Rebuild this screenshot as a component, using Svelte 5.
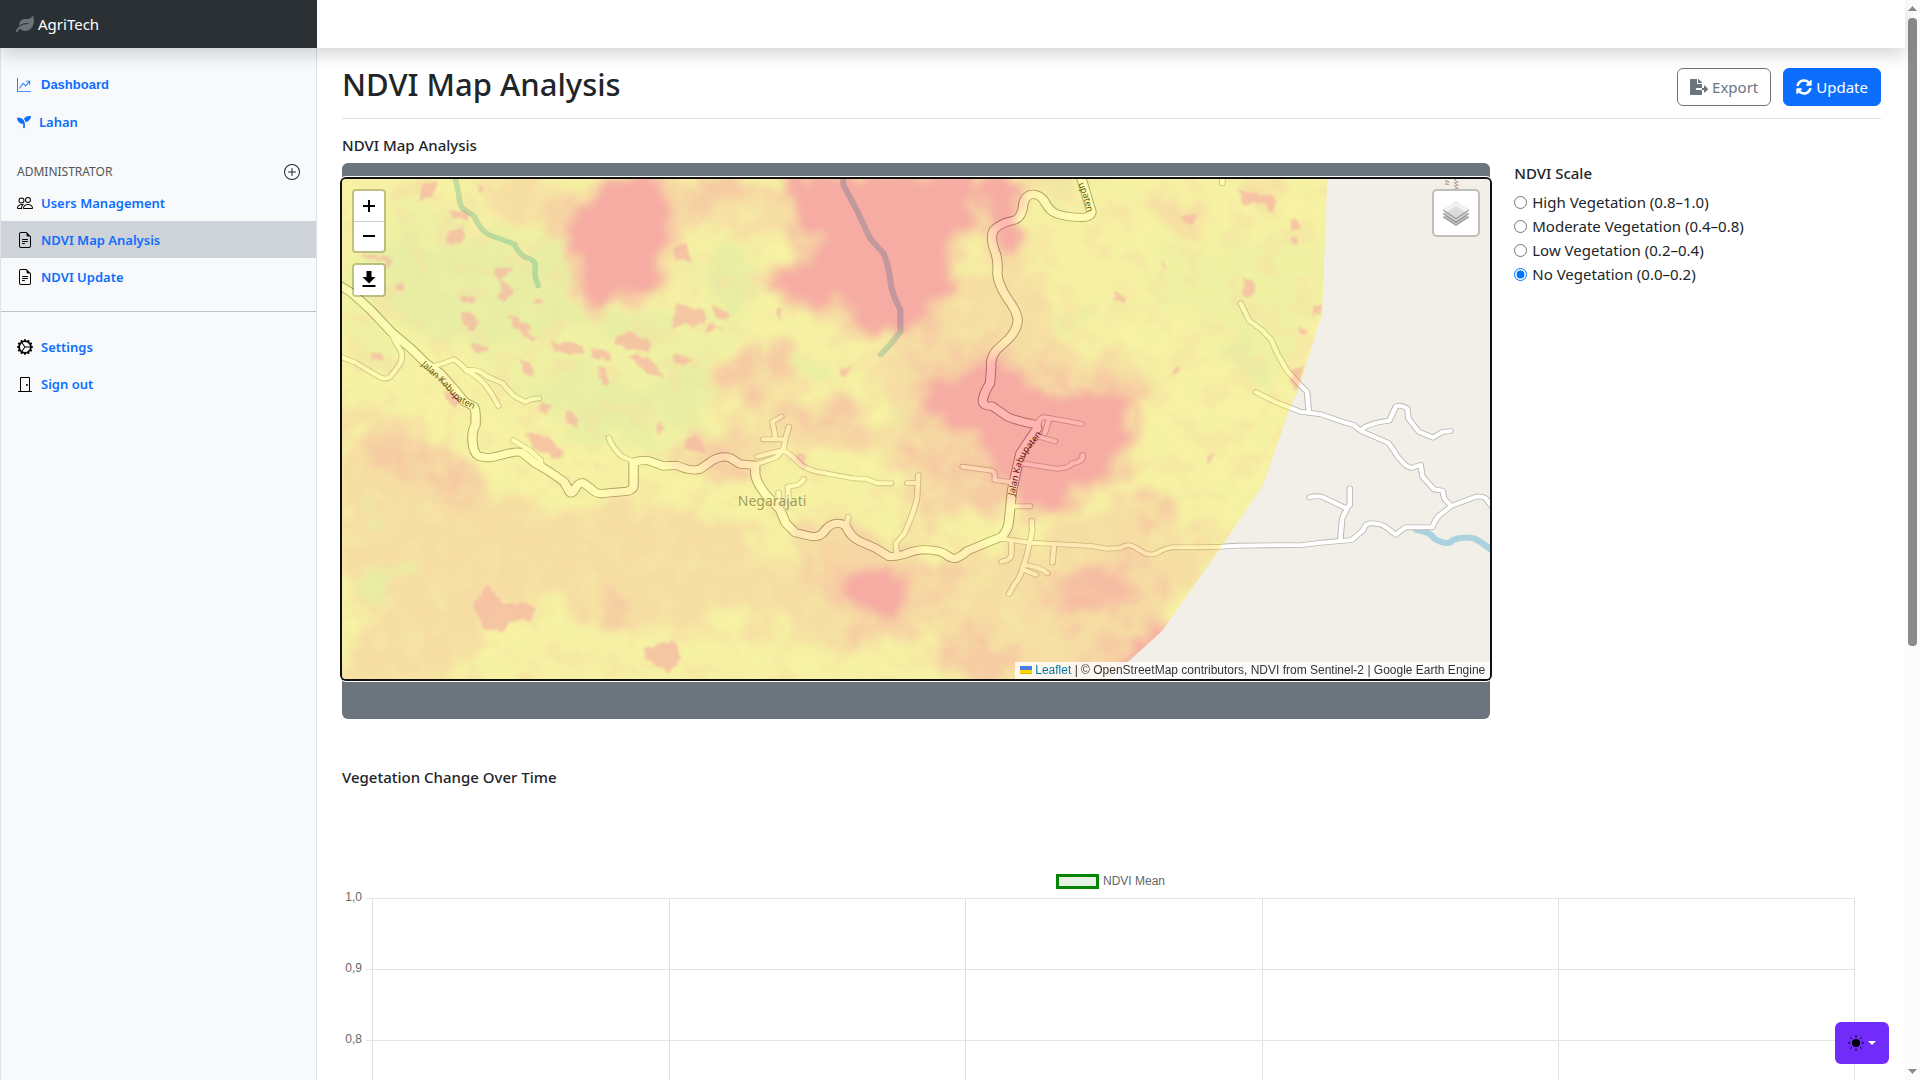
<script>
  const icons = {
    chart: {
      box: '0 0 16 16',
      d: 'M0 0h1v15h15v1H0zm10 3.5a.5.5 0 0 1 .5-.5h4a.5.5 0 0 1 .5.5v4a.5.5 0 0 1-1 0V4.9l-3.613 4.417a.5.5 0 0 1-.74.037L7.06 6.767l-3.656 5.027a.5.5 0 0 1-.808-.588l4-5.5a.5.5 0 0 1 .758-.06l2.609 2.61L13.445 4H10.5a.5.5 0 0 1-.5-.5'
    },
    seedling: {
      box: '0 0 512 512',
      d: 'M64 96H0c0 123.7 100.3 224 224 224v144c0 8.8 7.2 16 16 16h32c8.8 0 16-7.2 16-16V320C288 196.3 187.7 96 64 96zm384-64c-84.2 0-157.4 46.5-195.7 115.2 27.7 30.2 48.2 66.9 59 107.6C424 243.1 512 147.9 512 32h-64z'
    },
    leaf: {
      box: '0 0 576 512',
      d: 'M546.2 9.7c-5.6-12.5-21.6-13-28.3-1.2C486.9 62.4 431.4 96 368 96h-80C182 96 96 182 96 288c0 7 .8 13.7 1.5 20.5C161.3 262.8 253.4 224 384 224c8.8 0 16 7.2 16 16s-7.2 16-16 16C132.6 256 26 410.1 2.4 468c-6.6 16.3 1.2 34.9 17.5 41.6 16.4 6.8 35-1.1 41.8-17.3 1.5-3.6 20.9-47.9 71.9-90.6 32.4 43.9 94 85.8 174.9 77.2C465.5 467.5 576 326.7 576 154.3c0-50.2-10.8-102.2-29.8-144.6z'
    },
    plus: {
      box: '0 0 16 16',
      d: 'M8 15A7 7 0 1 1 8 1a7 7 0 0 1 0 14m0 1A8 8 0 1 0 8 0a8 8 0 0 0 0 16M8 4a.5.5 0 0 1 .5.5v3h3a.5.5 0 0 1 0 1h-3v3a.5.5 0 0 1-1 0v-3h-3a.5.5 0 0 1 0-1h3v-3A.5.5 0 0 1 8 4'
    },
    people: {
      box: '0 0 16 16',
      d: 'M15 14s1 0 1-1-1-4-5-4-5 3-5 4 1 1 1 1zm-7.978-1L7 12.996c.001-.264.167-1.03.76-1.72C8.312 10.629 9.282 10 11 10c1.717 0 2.687.63 3.24 1.276.593.69.758 1.457.76 1.72l-.008.002-.014.002zM11 7a2 2 0 1 0 0-4 2 2 0 0 0 0 4m3-2a3 3 0 1 1-6 0 3 3 0 0 1 6 0M6.936 9.28a6 6 0 0 0-1.23-.247A7 7 0 0 0 5 9c-4 0-5 3-5 4q0 1 1 1h4.216A2.24 2.24 0 0 1 5 13c0-1.01.377-2.042 1.09-2.904.243-.294.526-.569.846-.816M4.92 10A5.5 5.5 0 0 0 4 13H1c0-.26.164-1.03.76-1.724.545-.636 1.492-1.256 3.16-1.275ZM1.5 5.5a3 3 0 1 1 6 0 3 3 0 0 1-6 0m3-2a2 2 0 1 0 0 4 2 2 0 0 0 0-4'
    },
    file: {
      box: '0 0 16 16',
      d: 'M5.5 7a.5.5 0 0 0 0 1h5a.5.5 0 0 0 0-1zM5 9.5a.5.5 0 0 1 .5-.5h5a.5.5 0 0 1 0 1h-5a.5.5 0 0 1-.5-.5m0 2a.5.5 0 0 1 .5-.5h2a.5.5 0 0 1 0 1h-2a.5.5 0 0 1-.5-.5M9.5 0H4a2 2 0 0 0-2 2v12a2 2 0 0 0 2 2h8a2 2 0 0 0 2-2V4.5zm0 1v2A1.5 1.5 0 0 0 11 4.5h2V14a1 1 0 0 1-1 1H4a1 1 0 0 1-1-1V2a1 1 0 0 1 1-1z'
    },
    gear: {
      box: '0 0 16 16',
      d: 'M7.068.727c.243-.97 1.62-.97 1.864 0l.071.286a.96.96 0 0 0 1.622.434l.205-.211c.695-.719 1.888-.03 1.613.931l-.08.284a.96.96 0 0 0 1.187 1.187l.283-.081c.96-.275 1.65.918.931 1.613l-.211.205a.96.96 0 0 0 .434 1.622l.286.071c.97.243.97 1.62 0 1.864l-.286.071a.96.96 0 0 0-.434 1.622l.211.205c.719.695.03 1.888-.931 1.613l-.284-.08a.96.96 0 0 0-1.187 1.187l.081.283c.275.96-.918 1.65-1.613.931l-.205-.211a.96.96 0 0 0-1.622.434l-.071.286c-.243.97-1.62.97-1.864 0l-.071-.286a.96.96 0 0 0-1.622-.434l-.205.211c-.695.719-1.888.03-1.613-.931l.08-.284a.96.96 0 0 0-1.186-1.187l-.284.081c-.96.275-1.65-.918-.931-1.613l.211-.205a.96.96 0 0 0-.434-1.622l-.286-.071c-.97-.243-.97-1.62 0-1.864l.286-.071a.96.96 0 0 0 .434-1.622l-.211-.205c-.719-.695-.03-1.888.931-1.613l.284.08a.96.96 0 0 0 1.187-1.186l-.081-.284c-.275-.96.918-1.65 1.613-.931l.205.211a.96.96 0 0 0 1.622-.434zM12.973 8.5H8.25l-2.834 3.779A4.998 4.998 0 0 0 12.973 8.5m0-1a4.998 4.998 0 0 0-7.557-3.779l2.834 3.78zM5.048 3.967l-.087.065zm-.431.355A4.98 4.98 0 0 0 3.002 8c0 1.455.622 2.765 1.615 3.678L7.375 8zm.344 7.646.087.065z'
    },
    door: {
      box: '0 0 16 16',
      d: 'M3 2a1 1 0 0 1 1-1h8a1 1 0 0 1 1 1v13h1.5a.5.5 0 0 1 0 1h-13a.5.5 0 0 1 0-1H3zm1 13h8V2H4zM9 9a1 1 0 1 0 2 0 1 1 0 0 0-2 0'
    },
    export: {
      box: '0 0 576 512',
      d: 'M384 121.9c0-6.3-2.5-12.4-7-16.9L279.1 7c-4.5-4.5-10.6-7-17-7H256v128h128zM571 308l-95.7-96.4c-10.1-10.1-27.4-3-27.4 11.3V288h-64v64h64v65.2c0 14.3 17.3 21.4 27.4 11.3L571 332c6.6-6.6 6.6-17.4 0-24zm-379 28v-32c0-8.8 7.2-16 16-16h176V160H248c-13.2 0-24-10.8-24-24V0H24C10.7 0 0 10.7 0 24v464c0 13.3 10.7 24 24 24h336c13.3 0 24-10.7 24-24V352H208c-8.8 0-16-7.2-16-16z'
    },
    sync: {
      box: '0 0 512 512',
      d: 'M370.72 133.28C339.458 104.008 298.888 87.962 255.848 88c-77.458.068-144.328 53.178-162.791 126.85-1.344 5.363-6.122 9.15-11.651 9.15H24.103c-7.498 0-13.194-6.807-11.807-14.176C33.933 94.924 134.813 8 256 8c66.448 0 126.791 26.136 171.315 68.685L463.03 40.97C478.149 25.851 504 36.559 504 57.941V192c0 13.255-10.745 24-24 24H345.941c-21.382 0-32.09-25.851-16.971-40.971l41.75-41.749zM32 296h134.059c21.382 0 32.09 25.851 16.971 40.971l-41.75 41.75c31.262 29.273 71.835 45.319 114.876 45.28 77.418-.07 144.315-53.144 162.787-126.849 1.344-5.363 6.122-9.15 11.651-9.15h57.304c7.498 0 13.194 6.807 11.807 14.176C478.067 417.076 377.187 504 256 504c-66.448 0-126.791-26.136-171.315-68.685L48.97 471.03C33.851 486.149 8 475.441 8 454.059V320c0-13.255 10.745-24 24-24z'
    }
  };

  const mainLinks = [
    { label: 'Dashboard', icon: 'chart', tint: true },
    { label: 'Lahan', icon: 'seedling', tint: true }
  ];
  const adminLinks = [
    { label: 'Users Management', icon: 'people' },
    { label: 'NDVI Map Analysis', icon: 'file', active: true },
    { label: 'NDVI Update', icon: 'file' }
  ];
  const accountLinks = [
    { label: 'Settings', icon: 'gear' },
    { label: 'Sign out', icon: 'door' }
  ];

  const scale = [
    { value: 'high', label: 'High Vegetation (0.8–1.0)' },
    { value: 'moderate', label: 'Moderate Vegetation (0.4–0.8)' },
    { value: 'low', label: 'Low Vegetation (0.2–0.4)' },
    { value: 'none', label: 'No Vegetation (0.0–0.2)' }
  ];
  let selected = $state('none');

  const ticks = ['1,0', '0,9', '0,8'];

  // The map is drawn in two sheets, west and east, that share one scale.
  const west = 'translate(340 170) scale(.38265 .33333)';
  const east = 'translate(900 170) scale(.38265 .33333)';

  const roads = [
    { t: west, main: true, d: 'M-10 340L30 368L80 420L135 487L185 535L225 580L262 610L300 660L325 695L350 710Q356 720 354 765Q345 780 346 810Q348 850 362 858Q385 867 405 860L440 850Q470 842 478 850L510 880L545 903L585 935L595 955Q603 980 612 960Q622 938 635 938L655 955Q672 975 690 970L750 964Q767 960 767 945V878Q780 870 805 872L845 888L880 886Q915 905 940 898L975 870Q1000 855 1020 864L1045 882L1085 886V915Q1090 940 1110 970L1150 1020L1165 1060L1190 1088L1235 1100Q1255 1100 1265 1085Q1280 1060 1300 1060Q1318 1060 1325 1075Q1335 1100 1355 1112L1400 1135L1435 1160Q1455 1160 1475 1153Q1500 1140 1525 1139Q1570 1140 1585 1155Q1600 1168 1610 1165Q1625 1158 1640 1142L1690 1118L1730 1100Q1748 1075 1748 1050L1756 960L1768 900L1778 850Q1800 810 1822 775' },
    { t: east, main: true, d: 'M356 764Q310 755 280 740L240 708Q215 710 216 690Q220 665 235 640L238 590Q235 565 252 540L285 505Q312 470 306 440Q300 415 280 385Q255 340 254 310Q258 270 245 235Q235 200 245 180Q260 160 300 150Q320 140 322 100Q328 73 350 73Q370 76 380 100Q392 125 410 132Q440 142 465 142Q500 145 500 125L470 10' },
    { t: west, d: 'M135 490Q145 520 158 540Q167 560 155 585L132 620Q122 630 105 622L40 578L-10 555' },
    { t: west, d: 'M240 590L265 582L298 568Q315 580 330 600Q360 620 380 645Q400 675 414 708' },
    { t: west, d: 'M330 602Q355 592 385 620L425 640Q445 672 465 685L485 696L500 688L520 685' },
    { t: west, d: 'M452 810L495 840L525 870V890' },
    { t: west, d: 'M702 803Q710 830 735 858L768 875' },
    { t: west, d: 'M1085 884L1140 862L1158 840L1165 800L1173 770' },
    { t: west, d: 'M1090 860L1158 840Q1180 855 1205 885Q1230 905 1270 910L1340 925L1375 927L1405 940H1440' },
    { t: west, d: 'M1106 808H1160M1138 805L1130 755L1153 740' },
    { t: west, d: 'M1146 967V1010M1172 990L1170 950L1195 945Q1205 940 1212 927' },
    { t: west, d: 'M1328 1040L1322 1075M1455 1150L1452 1120L1475 1090Q1505 1010 1508 980L1511 915M1482 939H1510' },
    { t: east, d: 'M358 775Q362 738 380 742L430 752L475 762M390 745L378 790M362 800L405 814' },
    { t: east, d: 'M318 880L410 896Q440 895 450 880Q480 875 477 855' },
    { t: east, d: 'M163 890L240 902Q250 905 247 930L295 937M290 1009H340' },
    { t: east, d: 'M265 1106L340 1118L500 1128L540 1136L575 1134Q595 1120 610 1130L640 1150Q655 1157 670 1150Q690 1135 710 1132H790L838 1130L880 1127L1050 1125L1100 1118L1180 1110L1210 1080Q1215 1060 1230 1060Q1255 1060 1270 1072L1295 1094Q1305 1085 1320 1072H1390Q1400 1045 1410 1035L1440 1008' },
    { t: east, d: 'M344 1052L345 1085L330 1160L320 1195Q315 1220 300 1240L284 1272M325 1185Q365 1190 385 1210M325 1200L355 1214' },
    { t: east, d: 'M291 1115V1140Q292 1165 280 1170L265 1175M402 1128L398 1178' },
    { t: east, d: 'M890 400L912 452L945 480L970 510L985 550L1010 600L1045 645L1063 665L1068 725' },
    { t: east, d: 'M930 667L985 698L1045 725L1100 733L1160 757L1185 765L1203 782L1275 818Q1290 840 1300 860L1320 885Q1335 898 1345 890L1360 885L1365 920L1395 958L1418 962Q1420 985 1425 990L1440 1008L1505 980Q1520 978 1530 985L1550 1015' },
    { t: east, d: 'M1203 780Q1225 758 1278 752L1295 710Q1305 702 1325 715L1328 745L1355 785L1392 803L1415 787L1438 783' },
    { t: east, d: 'M1070 982Q1090 975 1105 982L1165 1015L1175 1005V955M1168 1015L1155 1045L1150 1110' },
    { t: east, d: 'M842 20V40' }
  ];

  // NDVI classes, painted from broad washes to the smallest patches.
  const orange = [
    { t: west, d: 'M370 20L1900 20L1860 300L1700 560L1560 560L1480 500L1400 420L1260 400L1130 350L1180 220L1000 170L900 170L850 280L830 360L740 380L680 430L630 390L580 280L540 170L400 180Z' },
    { t: west, d: 'M0 740L120 760L300 860L420 960L560 1010L740 990L900 1010L1040 1080L1160 1180L1280 1220L1560 1200L1700 1230L1700 1400L1350 1420L1200 1400L1050 1340L850 1400L620 1330L520 1280L380 1340L330 1520L0 1540L80 1350L0 1200Z' },
    { t: west, d: 'M1140 700L1260 680L1400 720L1480 780L1600 780L1600 1060L1500 1040L1490 880L1360 860L1290 800L1220 860L1140 840L1090 880L930 860L980 800Z' },
    { t: west, d: 'M980 560L1050 530L1180 520L1220 560L1180 680L1050 720L960 660Z' },
    { t: west, d: 'M1440 500L1640 480L1640 700L1480 720L1380 640Z' },
    { t: east, d: 'M0 500L80 450L180 370L360 360L420 500L480 540L600 540L640 640L620 760L570 900L480 1010L340 1060L180 1000L60 1060L0 1050Z' },
    { t: east, d: 'M20 1180L220 1150L400 1080L560 990L680 960L780 980L760 1050L820 1150L750 1290L680 1390L520 1540L260 1540L100 1500L0 1360Z' },
    { t: east, d: 'M640 60L720 90L800 110L790 190L700 170L640 140ZM880 30L990 30L980 130L900 120ZM630 60L660 65L650 90L630 90Z' },
    { t: west, d: 'M150 30L260 30L230 110L160 120ZM270 120L350 120L330 220L270 210Z' },
    { t: east, d: 'M170 180L320 240L290 340L190 350L100 360L120 280Z' }
  ];
  const yellow = [
    { t: west, d: 'M830 230L900 180L960 240L1120 250L1160 320L1100 400L900 420L830 380Z' },
    { t: east, d: 'M120 240L160 190L230 210L240 300L170 330L130 290Z' },
    { t: west, d: 'M1180 480L1320 500L1340 640L1250 690L1180 640Z' },
    { t: west, d: 'M380 1460L520 1400L700 1400L800 1480L1000 1450L1150 1500L1300 1540L420 1540Z' },
    { t: west, d: 'M1230 940L1400 920L1480 1000L1430 1100L1350 1100L1280 1020Z' },
    { t: east, d: 'M30 950L160 930L230 1000L230 1090L120 1110L20 1080ZM0 1290L80 1240L120 1380L60 1500L0 1500Z' },
    { t: east, d: 'M320 110L600 30L600 400L500 540L420 500L400 380L330 330Z' }
  ];
  const meadow = [
    { t: west, d: 'M40 160L200 60L330 120L380 170L560 170L620 400L700 460L820 420L880 260L1100 250L1140 340L1060 460L1000 520L900 640L960 760L900 850L760 860L560 740L420 620L240 520L120 430L40 330Z' },
    { t: west, d: 'M60 400L200 560L120 620L0 540V380Z' },
    { t: east, d: 'M640 240L900 200L1090 180L1090 420L1000 600L860 520L700 420Z' }
  ];
  const green = [
    { t: west, d: 'M60 240L180 180L300 240L380 200L480 250L540 180L570 240L600 400L680 450L820 420L860 470L820 520L640 460L560 520L480 480L420 540L300 500L180 480L80 400Z' },
    { t: west, d: 'M440 640L600 580L720 650L860 640L900 560L980 680L940 780L820 740L760 830L640 800L560 720Z' },
    { t: west, d: 'M900 300L1040 240L1100 330L1040 420L940 380Z' },
    { t: west, d: 'M60 970L105 1010L90 1050L65 1060ZM130 700L155 700L150 745L130 740Z' },
    { t: west, d: 'M1180 560L1290 560L1290 640L1200 660Z' },
    { t: east, d: 'M410 390L480 410L500 460L430 480ZM860 500L950 560L950 640L900 620ZM360 70L460 40L460 60L380 90Z' },
    { t: east, d: 'M0 700L40 720L30 760L0 760Z' },
    { t: west, d: 'M30 1230L150 1190L180 1230L80 1300Z' }
  ];
  const blush = [
    { t: west, d: 'M580 100L700 20H1700L1620 300L1540 500L1340 500L1220 430L1110 350L1180 240L1160 60L900 100L880 230L840 370L730 400L670 440L620 380L560 200Z' },
    { t: east, d: 'M20 700L100 560L250 500L360 560L480 620L600 640L640 730L610 850L560 940L460 1000L330 1050L200 1000L60 1000L20 860Z' },
    { t: east, d: 'M380 1210L560 1150L680 1220L640 1330L460 1360L380 1300ZM380 1540L560 1400L740 1340L700 1540Z' },
    { t: west, d: 'M220 930L340 880L400 940L350 1040L240 980ZM1160 720L1330 690L1400 740L1330 800L1220 800Z' },
    { t: west, d: 'M1160 1060L1380 1060L1440 1140L1600 1190L1540 1400L1340 1380L1220 1240ZM620 1310L780 1290L780 1370L660 1380Z' },
    { t: west, d: 'M990 560L1060 530L1170 540L1160 620L1050 680L980 620ZM900 820L1040 800L1100 900L980 930L880 880ZM1480 560L1640 520V720L1500 720Z' },
    { t: west, d: 'M80 800L200 760L300 860L200 900L80 880ZM1480 900L1600 860V1040L1510 1060Z' },
    { t: east, d: 'M620 1000L750 980L740 1040L640 1060ZM70 1380L220 1340L300 1480L120 1540ZM200 20H310L330 200L280 270L190 200Z' }
  ];
  const red = [
    { t: west, d: 'M700 20H835L862 150L835 250L830 335L780 380L732 350L690 430L645 390L630 280L590 210L620 130L670 90Z' },
    { t: west, d: 'M1165 20H1655L1650 150L1585 220L1575 270L1604 330L1550 390L1515 440L1465 485L1350 488L1365 400L1300 385L1220 405L1130 345L1150 295L1240 275L1255 200L1200 160Z' },
    { t: east, d: 'M213 20H292L300 140L322 195L305 250L270 240L255 170L215 160Z' },
    { t: east, d: 'M60 690L180 590L262 560L300 620L330 660L440 680L550 660L602 720L590 800L540 890L475 960L400 1000L330 1035L300 950L240 900L210 780L100 750Z' },
    { t: east, d: 'M580 1480L640 1400L700 1370L650 1540H560Z' },
    { t: west, d: 'M1300 1230L1370 1195L1478 1210L1490 1280L1440 1360L1390 1330L1320 1270Z' },
    { t: west, d: 'M1540 640L1580 620L1580 720L1540 700Z' }
  ];
  const soft = [
    { t: east, d: 'M430 1230L540 1185L605 1240L560 1300L480 1325L430 1290Z' }
  ];
  const patches = [
    'M345 1300L390 1245L420 1292L508 1305L500 1350L440 1358L435 1385L380 1382Z',
    'M490 790L550 800L582 850L572 870L500 830Z', 'M590 720L610 725L625 775L590 760Z',
    'M878 400L955 425L950 460L868 470Z', 'M975 405L1015 430L1010 455L980 440Z',
    'M555 515L637 525L635 555L560 550Z', 'M715 510L755 485L815 515L808 548L730 530Z',
    'M655 532L705 545L702 570L660 562Z', 'M750 555L815 565L845 625L800 610Z',
    'M670 590L690 595L705 645L685 640Z', 'M470 565L495 575L510 625L480 610Z',
    'M312 375L352 378L348 400L318 402Z', 'M320 425L345 425L365 455L345 485L320 460Z',
    'M405 290L450 295L420 330L455 360L430 400L412 385L425 345L402 320Z',
    'M280 190L320 170L328 200L300 222L278 212Z', 'M285 120L335 125L330 150L290 140Z',
    'M210 50L250 35L245 80L210 90Z', 'M360 45L378 60L370 70Z',
    'M440 430L500 470L495 490L520 505L500 515L450 465Z', 'M345 520L390 535L370 548L350 545Z',
    'M150 340H168V362H150Z', 'M510 388H527V402H510Z', 'M80 550L110 550L112 575L85 570Z',
    'M60 250L140 265L125 300L110 270L65 262Z', 'M870 550L925 570L900 582L872 575Z',
    'M865 240L900 220L920 270L880 275Z', 'M960 465L1000 470L950 490Z', 'M1140 410L1158 415L1150 445L1140 440Z',
    'M1305 590L1335 590L1320 620L1305 612Z', 'M830 760L845 765L842 800L828 790Z', 'M900 800L935 805L960 850L900 840Z',
    'M1190 845L1220 860L1215 890L1195 880Z', 'M525 690L550 705L535 735L520 715Z',
    'M800 1430L870 1410L890 1460L860 1510L800 1470Z', 'M280 660L320 690L300 710L280 690Z',
    'M2345 60L2445 80L2440 130L2410 100L2360 100Z', 'M2200 140L2240 130L2235 165L2205 160Z',
    'M2360 320L2380 325L2390 370L2378 385L2362 365Z', 'M2485 150L2505 150L2505 180L2485 180Z',
    'M2488 195H2500V225H2488Z', 'M2020 365L2055 380L2045 400L2025 390Z', 'M2145 275L2160 290L2150 300Z',
    'M2510 470L2530 480L2520 495L2508 488Z', 'M2180 600L2195 590L2195 605L2160 625Z', 'M2265 860L2285 855L2270 875Z',
    'M2490 600L2520 590L2500 660L2480 640Z', 'M2540 405L2566 405L2560 435L2540 432Z'
  ];
</script>

{#snippet icon(name)}
  <svg class="icon" viewBox={icons[name].box} aria-hidden="true"><path d={icons[name].d} fill-rule="evenodd" /></svg>
{/snippet}

{#snippet navList(links)}
  <ul class="nav">
    {#each links as link}
      <li>
        <a href="#{link.icon}" class:active={link.active} class:tint={link.tint} class={link.icon}>
          {@render icon(link.icon)}{link.label}
        </a>
      </li>
    {/each}
  </ul>
{/snippet}

{#snippet area(shapes, fill)}
  {#each shapes as s}<path transform={s.t} d={s.d} {fill} />{/each}
{/snippet}

<div class="window">
  <div class="page">
    <header class="topbar">
      <a class="brand" href="#home">{@render icon('leaf')}AgriTech</a>
    </header>

    <div class="columns">
      <nav class="sidebar" aria-label="Main">
        {@render navList(mainLinks)}
        <div class="section">
          <h6>Administrator</h6>
          <button type="button" aria-label="Add">{@render icon('plus')}</button>
        </div>
        {@render navList(adminLinks)}
        <hr />
        {@render navList(accountLinks)}
      </nav>

      <main>
        <div class="title">
          <h1>NDVI Map Analysis</h1>
          <div class="actions">
            <button type="button" class="btn outline">{@render icon('export')}Export</button>
            <button type="button" class="btn primary">{@render icon('sync')}Update</button>
          </div>
        </div>

        <h6>NDVI Map Analysis</h6>
        <div class="analysis">
          <div class="frame">
            <div class="map">
              <svg class="canvas" viewBox="342 179 1148 500" preserveAspectRatio="xMidYMid slice" role="img" aria-label="NDVI map of Negarajati">
                <defs>
                  <clipPath id="coverage"><path d="M300 100H1327V177L1322 313L1298 390L1289 410L1263 485L1221 547L1162 631L1103 684H300Z" /></clipPath>
                  <filter id="wash" x="-10%" y="-10%" width="120%" height="120%">
                    <feTurbulence type="fractalNoise" baseFrequency="0.035" numOctaves="5" seed="4" result="n" />
                    <feDisplacementMap in="SourceGraphic" in2="n" scale="70" xChannelSelector="R" yChannelSelector="G" />
                    <feGaussianBlur stdDeviation="4" />
                  </filter>
                  <filter id="rough" x="-10%" y="-10%" width="120%" height="120%">
                    <feTurbulence type="fractalNoise" baseFrequency="0.06" numOctaves="4" seed="9" result="n" />
                    <feDisplacementMap in="SourceGraphic" in2="n" scale="32" xChannelSelector="R" yChannelSelector="G" />
                    <feGaussianBlur stdDeviation="4" />
                  </filter>
                  <filter id="spots" x="-5%" y="-5%" width="110%" height="110%">
                    <feTurbulence type="fractalNoise" baseFrequency="0.12" numOctaves="2" seed="2" result="n" />
                    <feDisplacementMap in="SourceGraphic" in2="n" scale="8" xChannelSelector="R" yChannelSelector="G" />
                    <feGaussianBlur stdDeviation="1" />
                  </filter>
                  <filter id="mottle" x="0" y="0" width="100%" height="100%">
                    <feTurbulence type="fractalNoise" baseFrequency="0.035 0.04" numOctaves="5" seed="21" />
                    <feColorMatrix values="0 0 0 0 1  0 0 0 0 .45  0 0 0 0 0  5 0 0 0 -2.500" />
                  </filter>
                  <filter id="lush" x="0" y="0" width="100%" height="100%">
                    <feTurbulence type="fractalNoise" baseFrequency="0.04" numOctaves="5" seed="8" />
                    <feColorMatrix values="0 0 0 0 .9  0 0 0 0 .95  0 0 0 0 0  0 4 0 0 -1.900" />
                  </filter>
                  <path id="street-west" d="M421 365L441 383L456 400L486 416" />
                  <path id="street-east" d="M1014 496L1020 468L1026 454L1048 426" />
                  <path id="street-north" d="M1078 184L1083 196L1090 224" />
                </defs>

                <rect x="300" y="150" width="1230" height="560" fill="#f2efe9" />
                <path class="water" transform={west} d="M298 10L310 70Q312 105 320 115L350 138Q365 180 390 195L455 222Q465 250 485 262Q510 270 510 285V320L518 348" stroke-width="15" />
                <path class="water" transform={west} d="M1315 10V45L1350 120L1385 205L1420 250Q1435 290 1440 350L1448 380L1464 420V485L1440 520L1413 554" stroke-width="16" />
                <path class="water" transform={east} d="M1350 1080Q1385 1085 1395 1105Q1430 1130 1445 1110Q1470 1098 1500 1105Q1525 1120 1550 1145" stroke-width="18" stroke-linecap="butt" />
                {#each roads as r}
                  <path class="road" class:casing={!r.main} class:maincasing={r.main} transform={r.t} d={r.d} />
                {/each}
                {#each roads as r}
                  <path class="road fill" class:mainfill={r.main} transform={r.t} d={r.d} />
                {/each}
                <g class="street">
                  <text><textPath href="#street-west">Jalan Kabupaten</textPath></text>
                  <text><textPath href="#street-east">Jalan Kabupaten</textPath></text>
                  <text><textPath href="#street-north">upaten</textPath></text>
                </g>
                <text class="village" x="772" y="506" text-anchor="middle">Negarajati</text>
                <path d="M1446 180v5M1448 181v4M1455 179v10M1457 181v8" stroke="#c3aba1" stroke-width="2" stroke-dasharray="2 1" />

                <g clip-path="url(#coverage)" opacity=".3">
                  <rect x="300" y="150" width="1100" height="560" fill="#fff500" />
                  <g filter="url(#wash)" opacity=".85">{@render area(orange, '#ffa800')}</g>
                  <g filter="url(#wash)" opacity=".6">{@render area(meadow, '#def000')}</g>
                  <g filter="url(#wash)">
                    {@render area(yellow, '#fff000')}
                    {@render area(green, '#cdea00')}
                  </g>
                  <g filter="url(#wash)" opacity=".55">{@render area(blush, '#ff4800')}</g>
                  <rect x="340" y="170" width="1000" height="520" filter="url(#lush)" opacity=".3" />
                  <rect x="340" y="170" width="1000" height="520" filter="url(#mottle)" opacity=".4" />
                  <g filter="url(#rough)" opacity=".5">{@render area(soft, '#ff1000')}</g>
                  <g filter="url(#rough)" opacity=".9">{@render area(red, '#ff0400')}</g>
                  <g filter="url(#spots)" opacity=".75">
                    {#each patches as d}<path transform={west} {d} fill="#ff3800" />{/each}
                  </g>
                </g>
              </svg>

              <div class="corner left">
                <div class="bar">
                  <button type="button" aria-label="Zoom in"><svg viewBox="0 0 30 30"><path d="M9 15h12M15 9v12" /></svg></button>
                  <button type="button" aria-label="Zoom out"><svg viewBox="0 0 30 30"><path d="M9 14h12" /></svg></button>
                </div>
                <div class="bar">
                  <button type="button" aria-label="Download"><svg viewBox="0 0 30 30"><path d="M12.500 6h5v6h4L15 18.500L8.500 12h4z" class="solid" /><path d="M8.500 21h13" /></svg></button>
                </div>
              </div>
              <div class="corner right">
                <div class="bar layers">
                  <button type="button" aria-label="Layers">
                    <svg viewBox="0 0 26 26">
                      <path d="M0 17L13 9l13 8-13 8.500z" fill="#b9b9b9" /><path d="M0 17l13 8.500L26 17" stroke="#8f8f8f" stroke-width="1" />
                      <path d="M0 13.500L13 5l13 8.500-13 8.500z" fill="#cecece" /><path d="M0 13.500l13 8.500 13-8.500" stroke="#858585" stroke-width="1" />
                      <path d="M0 10L13 1l13 9-13 8.500z" fill="#dcdcdc" /><path d="M0 10L13 1l13 9-4 2.500L13 6l-9 6.500z" fill="#f0f0f0" /><path d="M0 10l13 8.500L26 10" stroke="#858585" stroke-width="1" />
                    </svg>
                  </button>
                </div>
              </div>
              <div class="credit">
                <svg viewBox="0 0 12 8" aria-hidden="true"><path fill="#4c7be1" d="M0 0h12v4H0z" /><path fill="#ffd500" d="M0 4h12v3H0z" /><path fill="#e0bc00" d="M0 7h12v1H0z" /></svg>
                <a href="#leaflet">Leaflet</a> | © OpenStreetMap contributors, NDVI from Sentinel-2 | Google Earth Engine
              </div>
            </div>
          </div>

          <fieldset class="scale">
            <legend>NDVI Scale</legend>
            {#each scale as s}
              <label><input type="radio" name="ndvi" value={s.value} bind:group={selected} />{s.label}</label>
            {/each}
          </fieldset>
        </div>

        <h6>Vegetation Change Over Time</h6>
        <figure class="chart">
          <figcaption><span class="swatch"></span>NDVI Mean</figcaption>
          <div class="plot">
            <div class="axis">
              {#each ticks as t}<span>{t}</span>{/each}
            </div>
            <div class="grid">
              {#each ticks as _}
                <div class="row">{#each Array(5) as _}<i></i>{/each}</div>
              {/each}
            </div>
          </div>
        </figure>
      </main>
    </div>
  </div>

  <div class="scrollbar" aria-hidden="true">
    <svg viewBox="0 0 15 16"><path d="M3 11h9L7.500 6z" /></svg>
    <div class="track"><div class="thumb"></div></div>
    <svg viewBox="0 0 15 16"><path d="M3 5h9l-4.500 5z" /></svg>
  </div>

  <button type="button" class="theme" aria-label="Toggle theme">
    <svg class="sun" viewBox="0 0 16 16">
      <circle cx="8" cy="8" r="4" stroke="none" />
      <path d="M8 0v2.500M8 13.500v2.500M0 8h2.500M13.500 8h2.500M2.300 2.300l1.600 1.600M12.100 12.100l1.600 1.600M2.300 13.700l1.600-1.600M12.100 3.900l1.600-1.600" />
    </svg>
    <span class="caret"></span>
  </button>
</div>

<style>
  :global(body) {
    margin: 0;
    overflow: hidden;
    background: #fff;
    color: #212529;
    font: 15px/24px 'Segoe UI', 'Noto Sans', 'Open Sans', sans-serif;
  }
  * {
    box-sizing: border-box;
  }
  button {
    font: inherit;
    cursor: pointer;
  }
  h1, h6, ul, figure, fieldset {
    margin: 0;
    padding: 0;
    border: 0;
  }
  a {
    text-decoration: none;
  }
  .icon {
    width: 16px;
    height: 16px;
    fill: currentColor;
    flex: none;
  }
  .window {
    display: flex;
    height: 100vh;
    overflow: hidden;
  }
  .page {
    flex: 1;
    display: flex;
    flex-direction: column;
    min-width: 0;
  }
  .topbar {
    position: relative;
    z-index: 2;
    flex: none;
    display: grid;
    grid-template-columns: 317px 1fr;
    height: 48px;
    background: #fff;
    box-shadow: 0 8px 16px rgba(0, 0, 0, 0.15);
  }
  .brand {
    display: flex;
    align-items: center;
    gap: 4px;
    padding-left: 16px;
    background: #2b3035;
    color: #fff;
  }
  .brand .icon {
    width: 18px;
    color: #6c757d;
  }
  .columns {
    flex: 1;
    min-height: 0;
    display: grid;
    grid-template-columns: 317px 1fr;
  }
  .sidebar {
    padding-top: 18px;
    background: #f8f9fa;
    border: solid #dee2e6;
    border-width: 0 1px;
  }
  .nav {
    list-style: none;
  }
  .nav a {
    display: flex;
    align-items: center;
    gap: 8px;
    height: 37px;
    padding: 0 16px;
    color: #0d6efd;
    font-size: 13px;
    font-weight: 600;
  }
  .nav a .icon {
    color: #000;
  }
  .nav a.tint {
    gap: 10px;
  }
  .nav a.tint .icon {
    width: 14px;
    height: 14px;
    color: #0d6efd;
  }
  .nav a.seedling {
    gap: 8px;
  }
  .nav a.active {
    background: #ced2d9;
  }
  .section {
    display: flex;
    align-items: center;
    justify-content: space-between;
    margin-top: 22px;
    margin-bottom: 2px;
    padding: 0 16px;
    height: 20px;
  }
  .section h6 {
    color: #50555a;
    font-size: 12px;
    font-weight: 400;
    text-transform: uppercase;
  }
  .section button {
    display: flex;
    padding: 0;
    border: 0;
    background: none;
    color: #212529;
  }
  hr {
    margin: 16px 0;
    border: 0;
    border-top: 1px solid #bfc2c4;
  }
  main {
    min-width: 0;
    overflow: hidden;
    padding: 16px 24px 0 25px;
  }
  .title {
    display: flex;
    align-items: center;
    justify-content: space-between;
    height: 55px;
    padding-bottom: 8px;
    border-bottom: 1px solid #dee2e6;
    margin-bottom: 16px;
  }
  h1 {
    margin-bottom: 6px;
    font-size: 31px;
    line-height: 38px;
    font-weight: 500;
  }
  .actions {
    display: flex;
    gap: 12px;
  }
  .btn {
    display: flex;
    align-items: center;
    gap: 4px;
    height: 38px;
    padding: 0 12px;
    border: 1px solid #6c757d;
    border-radius: 6px;
    background: #fff;
    color: #6c757d;
  }
  .btn.outline .icon {
    width: 18px;
  }
  .btn.primary {
    border-color: #0d6efd;
    background: #0d6efd;
    color: #fff;
  }
  main h6, legend {
    padding: 0;
    margin-bottom: 8px;
    font-size: 15px;
    line-height: 20px;
    font-weight: 500;
  }
  .analysis {
    display: grid;
    grid-template-columns: repeat(4, 1fr);
    gap: 24px;
    margin-bottom: 48px;
  }
  .frame {
    grid-column: span 3;
    padding: 16px 0 40px;
    border-radius: 6px;
    background: #6c757d;
  }
  .map {
    position: relative;
    height: 500px;
    border-radius: 4px;
    overflow: hidden;
    box-shadow: 0 0 0 2px #101010, 0 0 0 3px #fff;
  }
  .canvas {
    display: block;
    width: 100%;
    height: 100%;
  }
  .water {
    fill: none;
    stroke: #aad3df;
    stroke-linecap: round;
    stroke-linejoin: round;
  }
  .road {
    fill: none;
    stroke-linecap: round;
    stroke-linejoin: round;
  }
  .casing {
    stroke: #bab8b4;
    stroke-width: 17;
  }
  .maincasing {
    stroke: #8c8a85;
    stroke-width: 27;
  }
  .fill {
    stroke: #fff;
    stroke-width: 12;
  }
  .mainfill {
    stroke-width: 22;
  }
  .street {
    fill: #1a1208;
    font: 9px 'Noto Sans', sans-serif;
  }
  .village {
    fill: #777;
    font: 14px 'Noto Sans', sans-serif;
    stroke: rgba(255, 255, 255, 0.5);
    stroke-width: 2px;
    paint-order: stroke;
  }
  .corner {
    position: absolute;
    top: 10px;
    display: grid;
    gap: 10px;
  }
  .left {
    left: 10px;
  }
  .right {
    right: 10px;
  }
  .bar {
    border: 2px solid rgba(0, 0, 0, 0.2);
    border-radius: 4px;
    background: #fff;
    background-clip: padding-box;
  }
  .bar button {
    display: block;
    height: 30px;
    padding: 0;
    border: 0;
    background: none;
    overflow: hidden;
  }
  .bar button + button {
    border-top: 1px solid #ccc;
  }
  .bar svg {
    display: block;
    width: 30px;
    height: 30px;
    fill: none;
    stroke: #000;
    stroke-width: 2;
  }
  .bar .solid {
    fill: #000;
    stroke: none;
  }
  .layers {
    padding: 9px;
    border-radius: 5px;
  }
  .layers button {
    height: 26px;
  }
  .layers svg {
    width: 26px;
    height: 26px;
    stroke: none;
  }
  .credit {
    position: absolute;
    right: 0;
    bottom: 0;
    padding: 0 5px;
    background: rgba(255, 255, 255, 0.8);
    color: #333;
    font: 12px/17px 'Liberation Sans', Arial, sans-serif;
  }
  .credit svg {
    width: 12px;
    height: 8px;
  }
  .credit a {
    color: #0078a8;
  }
  .scale {
    padding-top: 1px;
  }
  .scale legend {
    margin-bottom: 6px;
  }
  .scale label {
    display: flex;
    align-items: center;
    gap: 5px;
    height: 24px;
  }
  .scale input {
    width: 13px;
    height: 13px;
    margin: 0;
    accent-color: #0075ff;
  }
  .chart {
    padding-top: 78px;
    color: #666;
    font: 12px/16px 'Liberation Sans', Arial, sans-serif;
  }
  figcaption {
    display: flex;
    align-items: center;
    justify-content: center;
    gap: 4px;
    margin-right: 2px;
    margin-bottom: 9px;
  }
  .swatch {
    width: 43px;
    height: 15px;
    border: 3px solid #048504;
    background: #e6f2e6;
  }
  .plot {
    display: flex;
    gap: 4px;
  }
  .axis span {
    display: block;
    width: 20px;
    height: 71px;
    margin-top: -9px;
    margin-bottom: 9px;
    text-align: right;
  }
  .grid {
    flex: 1;
    margin-right: 26px;
  }
  .row {
    display: grid;
    grid-template-columns: repeat(5, 1fr);
    height: 71px;
    padding-left: 6px;
    border-top: 1px solid #e5e5e5;
  }
  .row i {
    border-left: 1px solid #e0e0e0;
  }
  .row i:last-child {
    border-right: 1px solid #e0e0e0;
  }
  .scrollbar {
    flex: none;
    width: 15px;
    display: flex;
    flex-direction: column;
    background: #fcfcfc;
  }
  .scrollbar svg {
    width: 15px;
    height: 16px;
    fill: #8b8b8b;
  }
  .track {
    flex: 1;
    padding: 2px 3px 0 3px;
  }
  .thumb {
    height: 60%;
    border-radius: 4px;
    background: #8b8b8b;
  }
  .theme {
    position: fixed;
    right: 31px;
    bottom: 16px;
    z-index: 3;
    display: flex;
    align-items: center;
    justify-content: center;
    gap: 4px;
    width: 54px;
    height: 42px;
    padding: 0;
    border: 0;
    border-radius: 6px;
    background: #712cf9;
  }
  .sun {
    width: 16px;
    height: 16px;
    stroke: #000;
  }
  .caret {
    border: 4px solid transparent;
    border-top-color: #fff;
    border-bottom: 0;
  }
</style>
